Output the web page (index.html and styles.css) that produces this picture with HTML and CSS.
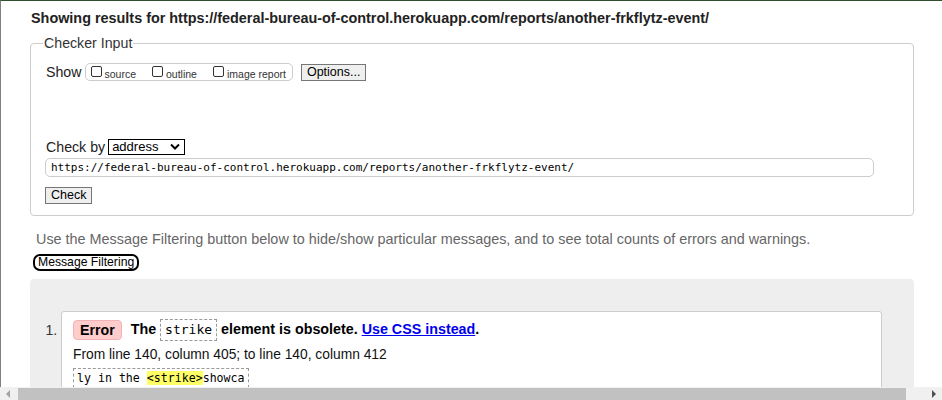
FILE: index.html
```html
<!DOCTYPE html>
<html>
<head>
<meta charset="utf-8">
<link rel="stylesheet" href="styles.css">
</head>
<body>
<div class="frame">
  <h2 class="results">Showing results for https://federal-bureau-of-control.herokuapp.com/reports/another-frkflytz-event/</h2>
  <fieldset class="checker">
    <legend>Checker Input</legend>
    <div class="show-row">
      <span class="show-label">Show</span>
      <span class="opts">
        <label class="opt"><span class="cb"></span>source</label>
        <label class="opt"><span class="cb"></span>outline</label>
        <label class="opt"><span class="cb"></span>image report</label>
      </span>
      <span class="btn">Options...</span>
    </div>
    <div class="checkby-row">
      <span class="checkby-label">Check by</span>
      <span class="select">address<svg class="chev" width="10" height="7" viewBox="0 0 10 7"><path d="M1 1.5 L5 5.5 L9 1.5" fill="none" stroke="#000" stroke-width="2"/></svg></span>
    </div>
    <div class="url-input">https://federal-bureau-of-control.herokuapp.com/reports/another-frkflytz-event/</div>
    <div class="check-row"><span class="btn">Check</span></div>
  </fieldset>
  <p class="hint">Use the Message Filtering button below to hide/show particular messages, and to see total counts of errors and warnings.</p>
  <div class="filter-row"><span class="filter-btn">Message Filtering</span></div>
  <div class="results-box">
    <ol class="messages">
      <li class="msg">
        <p class="msg-title"><strong class="badge">Error</strong><span class="msg-text">The <code class="tag">strike</code> element is obsolete. <a href="#" class="link">Use CSS instead</a>.</span></p>
        <p class="location">From line 140, column 405; to line 140, column 412</p>
        <p class="extract"><code>ly in the <b class="hl">&lt;strike&gt;</b>showca</code></p>
      </li>
    </ol>
  </div>
</div>
<div class="hscroll">
  <span class="arrow left"></span>
  <span class="thumb"></span>
  <span class="arrow right"></span>
</div>
</body>
</html>
```
FILE: styles.css
```css
html, body {
  margin: 0;
  padding: 0;
  height: 400px;
  overflow: hidden;
  background: #fff;
}
body {
  font-family: "Liberation Sans", Arial, sans-serif;
  color: #000;
}
.frame {
  border-top: 1px solid #2f4f2f;
  border-left: 1px solid #808080;
  height: 399px;
  padding-left: 29px;
  padding-right: 28px;
  box-sizing: border-box;
}
.results {
  margin: 0;
  padding: 8px 0 0 1px;
  font-size: 14.4px;
  line-height: 18px;
  font-weight: bold;
  color: #222;
}
.checker {
  margin: 8px 0 0 0;
  padding: 2px 15px 11px 15px;
  border: 1px solid #ccc;
  border-radius: 4px;
}
.checker legend {
  padding: 0 1px;
  margin-left: -3px;
  font-size: 14.2px;
  color: #333;
}
.show-row {
  display: flex;
  align-items: center;
  height: 18px;
  margin-top: 10px;
}
.show-label {
  font-size: 14.2px;
  color: #222;
  margin-right: 3px;
}
.opts {
  display: flex;
  align-items: center;
  border: 1px solid #ccc;
  border-radius: 5px;
  height: 16px;
  padding: 0 6px 0 5px;
  gap: 16px;
}
.opt {
  display: flex;
  align-items: flex-end;
  font-size: 10.5px;
  color: #333;
  line-height: 12px;
  padding-top: 3px;
}
.cb {
  width: 11px;
  height: 11px;
  border: 1px solid #333;
  border-radius: 2px;
  margin: 0 3px 0 0;
  box-sizing: border-box;
  align-self: flex-start;
  margin-top: -2px;
}
.btn {
  display: inline-block;
  border: 1px solid #767676;
  background: #efefef;
  font-size: 12.5px;
  line-height: 15px;
  padding: 0 5px;
  color: #000;
}
.show-row .btn {
  margin-left: 8px;
}
.checkby-row {
  display: flex;
  align-items: center;
  margin-top: 57px;
  height: 17px;
}
.checkby-label {
  font-size: 14.2px;
  color: #222;
  margin-right: 3px;
}
.select {
  display: inline-flex;
  align-items: center;
  justify-content: space-between;
  width: 77px;
  box-sizing: border-box;
  height: 16px;
  border: 1px solid #000;
  font-size: 13px;
  padding: 0 4px 0 3px;
}
.url-input {
  margin-top: 3px;
  height: 19px;
  border: 1px solid #ccc;
  border-radius: 5px;
  box-sizing: border-box;
  width: 829px;
  margin-left: -1px;
  font-family: "DejaVu Sans Mono", monospace;
  font-size: 11px;
  line-height: 17px;
  padding-left: 5px;
  color: #000;
}
.check-row {
  margin-top: 8px;
  margin-left: -1px;
}
.hint {
  margin: 14px 0 0 6px;
  font-size: 14.4px;
  line-height: 18px;
  color: #666;
}
.filter-row {
  margin-top: 4px;
  height: 17px;
}
.filter-btn {
  display: inline-block;
  margin-left: 3px;
  border: 2px solid #000;
  border-radius: 7px;
  font-size: 12.2px;
  line-height: 13px;
  padding: 0 3px;
}
.results-box {
  margin-top: 10px;
  background: #eee;
  border-radius: 4px;
  padding: 32px 32px 0 0;
  height: 200px;
}
.messages {
  margin: 0;
  padding-left: 31px;
}
.msg {
  background: #fff;
  border: 1px solid #ccc;
  border-radius: 3px;
  padding: 4px 11px 10px 11px;
  font-size: 15px;
}
.msg::marker {
  color: #333;
  font-size: 14px;
}
.msg p {
  margin: 0;
}
.msg-title {
  display: flex;
  align-items: center;
  height: 28px;
}
.badge {
  background: #fcc;
  border: 1px solid #f0b4b4;
  border-radius: 4px;
  padding: 0 6px;
  line-height: 18px;
  font-size: 14.2px;
  margin-right: 9px;
}
.msg-text {
  font-weight: bold;
  font-size: 14.3px;
}
.tag {
  font-family: "DejaVu Sans Mono", monospace;
  font-weight: normal;
  font-size: 13px;
  border: 1px dashed #999;
  padding: 2px 4px 3px;
  line-height: 20px;
}
.link {
  color: #00e;
  text-decoration: underline;
}
.location {
  font-size: 13.8px;
  line-height: 18px;
  margin-top: 2px !important;
  color: #111;
}
.extract {
  margin-top: 4px !important;
}
.extract code {
  display: inline-block;
  font-family: "DejaVu Sans Mono", monospace;
  font-size: 11.6px;
  border: 1px dashed #999;
  padding: 0 3px;
  line-height: 18px;
}
.hl {
  background: #ff6;
  font-weight: normal;
}
.hscroll {
  position: fixed;
  left: 0;
  bottom: 0;
  width: 942px;
  height: 13px;
  background: #f0f0f0;
}
.thumb {
  position: absolute;
  left: 18px;
  width: 888px;
  top: 1px;
  height: 12px;
  background: #c1c1c1;
}
.arrow {
  position: absolute;
  top: 3px;
  width: 0;
  height: 0;
  border-top: 4px solid transparent;
  border-bottom: 4px solid transparent;
}
.arrow.left {
  left: 6px;
  border-right: 4px solid #a3a3a3;
}
.arrow.right {
  right: 6px;
  border-left: 4px solid #505050;
}
```
